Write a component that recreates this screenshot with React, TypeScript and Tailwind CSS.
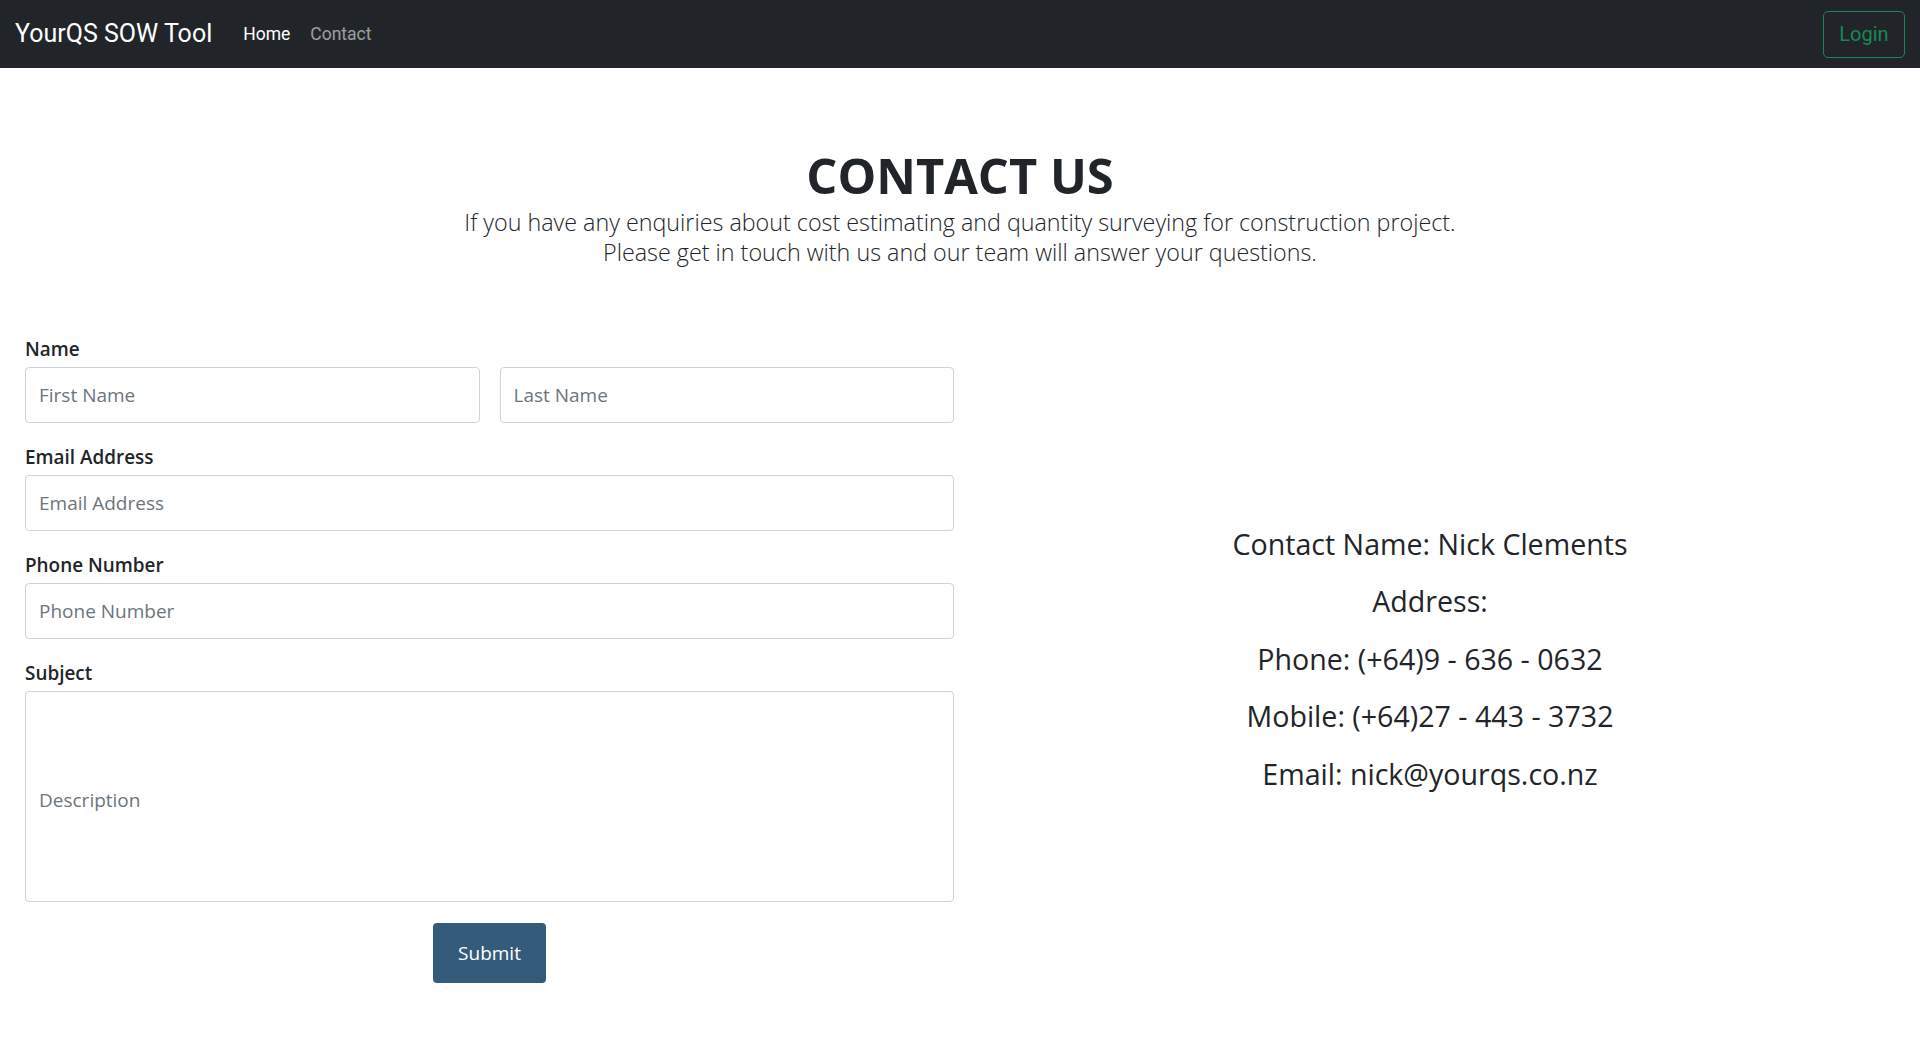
import React from "react";

const contactLines = [
  "Contact Name: Nick Clements",
  "Address:",
  "Phone: (+64)9 - 636 - 0632",
  "Mobile: (+64)27 - 443 - 3732",
  "Email: nick@yourqs.co.nz",
];

const inputClass =
  "w-full h-[56px] px-[13px] text-[19px] text-[#212529] border border-[#ced4da] rounded-[4px] bg-white outline-none placeholder:text-[#6c757d]";

const Label = ({ children }: { children: React.ReactNode }) => (
  <label className="block text-[18.9px] font-semibold leading-[30px] mb-[3px] text-[#212529]">
    {children}
  </label>
);

const App = () => {
  return (
    <div className="min-h-screen bg-white font-['Open_Sans',sans-serif] text-[#212529]">
      <nav className="h-[68px] bg-[#212529] flex items-center justify-between px-[15px] font-['Roboto',sans-serif]">
        <div className="flex items-center">
          <span className="text-white text-[25px] mr-[31px]">YourQS SOW Tool</span>
          <a className="text-white text-[17.5px] mr-[20px]">Home</a>
          <a className="text-white/55 text-[17.5px]">Contact</a>
        </div>
        <button className="h-[47px] w-[82px] border border-[#198754] rounded-[5px] text-[#198754] text-[20px]">
          Login
        </button>
      </nav>

      <section className="text-center pt-[78px]">
        <h1 className="text-[48.8px] font-bold leading-[58px] mb-[3px]">CONTACT US</h1>
        <p className="text-[23.3px] font-light leading-[30px] text-[#212529]">
          If you have any enquiries about cost estimating and quantity surveying for construction project.
          <br />
          Please get in touch with us and our team will answer your questions.
        </p>
      </section>

      <div className="flex mt-[67px]">
        <form className="w-[979px] px-[25px]" onSubmit={(e) => e.preventDefault()}>
          <div className="mb-[19px]">
            <Label>Name</Label>
            <div className="grid grid-cols-2 gap-[20px]">
              <input className={inputClass} placeholder="First Name" />
              <input className={inputClass} placeholder="Last Name" />
            </div>
          </div>
          <div className="mb-[19px]">
            <Label>Email Address</Label>
            <input className={inputClass} placeholder="Email Address" />
          </div>
          <div className="mb-[19px]">
            <Label>Phone Number</Label>
            <input className={inputClass} placeholder="Phone Number" />
          </div>
          <div className="mb-[15px]">
            <Label>Subject</Label>
            <textarea
              className="w-full h-[211px] px-[13px] pt-[94px] text-[19px] border border-[#ced4da] rounded-[4px] resize-none outline-none placeholder:text-[#6c757d]"
              placeholder="Description"
            />
          </div>
          <div className="flex justify-center">
            <button className="h-[60px] w-[113px] bg-[#345b7a] text-white text-[19px] rounded-[4px]">
              Submit
            </button>
          </div>
        </form>

        <div className="flex-1 flex flex-col justify-center items-center pr-[39px]">
          {contactLines.map((line) => (
            <p key={line} className="text-[28.6px] leading-[42px] mb-[15.5px] last:mb-0">
              {line}
            </p>
          ))}
        </div>
      </div>
    </div>
  );
};

export default App;
